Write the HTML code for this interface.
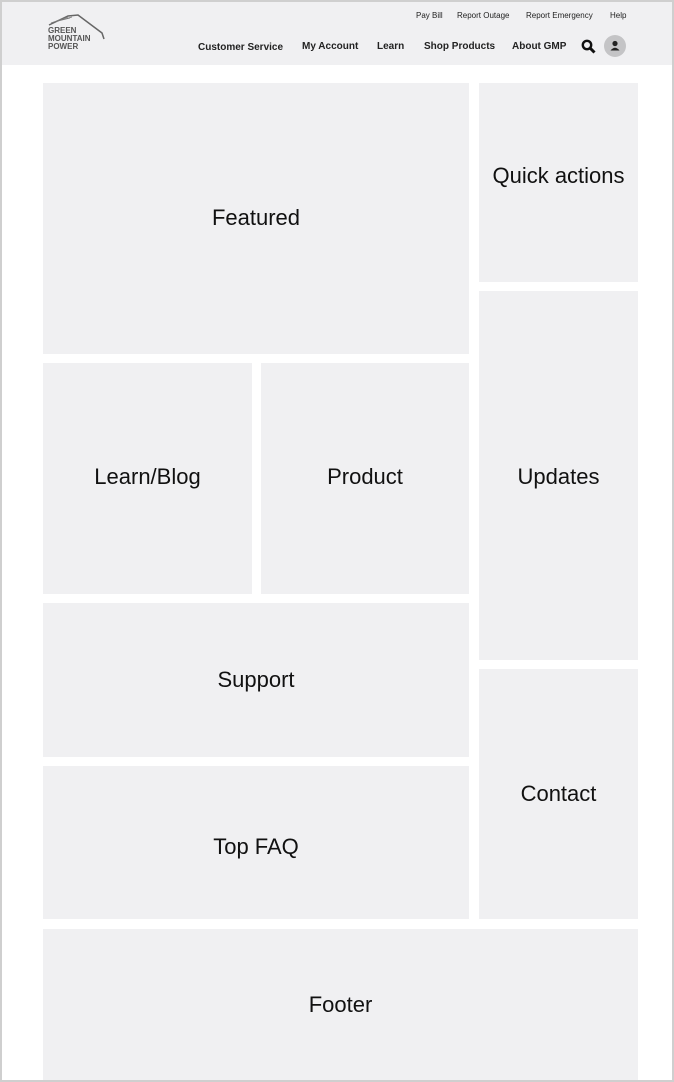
<!DOCTYPE html>
<html><head><style>
*{margin:0;padding:0;box-sizing:border-box}
body{width:674px;height:1082px;background:#fff;font-family:"Liberation Sans",Arial,sans-serif;position:relative;overflow:hidden}
.frame{position:absolute;left:0;top:0;width:674px;height:1082px;border:2px solid #cfcfcf}
.hdr{position:absolute;left:2px;top:2px;width:670px;height:63px;background:#f0f0f2}
.b{position:absolute;background:#f0f0f2;display:flex;align-items:center;justify-content:center;font-size:22px;color:#111}
.t{position:absolute;font-size:8px;color:#222}
.n{position:absolute;font-size:10px;font-weight:bold;color:#222}
</style></head><body>
<div class="hdr"></div>
<svg style="position:absolute;left:46px;top:13px" width="62" height="40" viewBox="0 0 62 40">
<path d="M3 12 L22 3 L32 2 L56 20 L58 26" fill="none" stroke="#666" stroke-width="1.5"/>
<path d="M5 10 L22 4 M8 9 L24 5 M12 8 L26 4" stroke="#777" stroke-width="0.8"/>
<text x="2" y="20" font-family="Liberation Sans" font-size="8" font-weight="bold" fill="#555">GREEN</text>
<text x="2" y="28" font-family="Liberation Sans" font-size="8" font-weight="bold" fill="#555">MOUNTAIN</text>
<text x="2" y="36" font-family="Liberation Sans" font-size="8" font-weight="bold" fill="#555">POWER</text>
</svg>
<div class="t" style="left:416px;top:11px">Pay Bill</div>
<div class="t" style="left:457px;top:11px">Report Outage</div>
<div class="t" style="left:526px;top:11px">Report Emergency</div>
<div class="t" style="left:610px;top:11px">Help</div>
<div class="n" style="left:198px;top:42px">Customer Service</div>
<div class="n" style="left:302px;top:41px">My Account</div>
<div class="n" style="left:377px;top:41px">Learn</div>
<div class="n" style="left:424px;top:41px">Shop Products</div>
<div class="n" style="left:512px;top:41px">About GMP</div>
<svg style="position:absolute;left:581px;top:39px" width="15" height="15" viewBox="0 0 15 15"><circle cx="6" cy="6" r="4.2" fill="none" stroke="#111" stroke-width="2.4"/><path d="M9 9 L13.5 13.5" stroke="#111" stroke-width="3"/></svg>
<svg style="position:absolute;left:604px;top:35px" width="22" height="22" viewBox="0 0 22 22"><circle cx="11" cy="11" r="11" fill="#c4c4c6"/><circle cx="11" cy="8.5" r="2.6" fill="#222"/><path d="M6.5 15.5 Q11 10 15.5 15.5 Z" fill="#222"/></svg>
<div class="b" style="left:43px;top:83px;width:426px;height:271px"><span style="margin-top:-2px">Featured</span></div>
<div class="b" style="left:479px;top:83px;width:159px;height:199px"><span style="margin-top:-14px">Quick actions</span></div>
<div class="b" style="left:43px;top:363px;width:209px;height:231px"><span style="margin-top:-4px">Learn/Blog</span></div>
<div class="b" style="left:261px;top:363px;width:208px;height:231px"><span style="margin-top:-4px">Product</span></div>
<div class="b" style="left:479px;top:291px;width:159px;height:369px"><span style="margin-top:2px">Updates</span></div>
<div class="b" style="left:43px;top:603px;width:426px;height:154px">Support</div>
<div class="b" style="left:43px;top:766px;width:426px;height:153px"><span style="margin-top:8px">Top FAQ</span></div>
<div class="b" style="left:479px;top:669px;width:159px;height:250px">Contact</div>
<div class="b" style="left:43px;top:929px;width:595px;height:151px">Footer</div>
<div class="frame"></div>
</body></html>
